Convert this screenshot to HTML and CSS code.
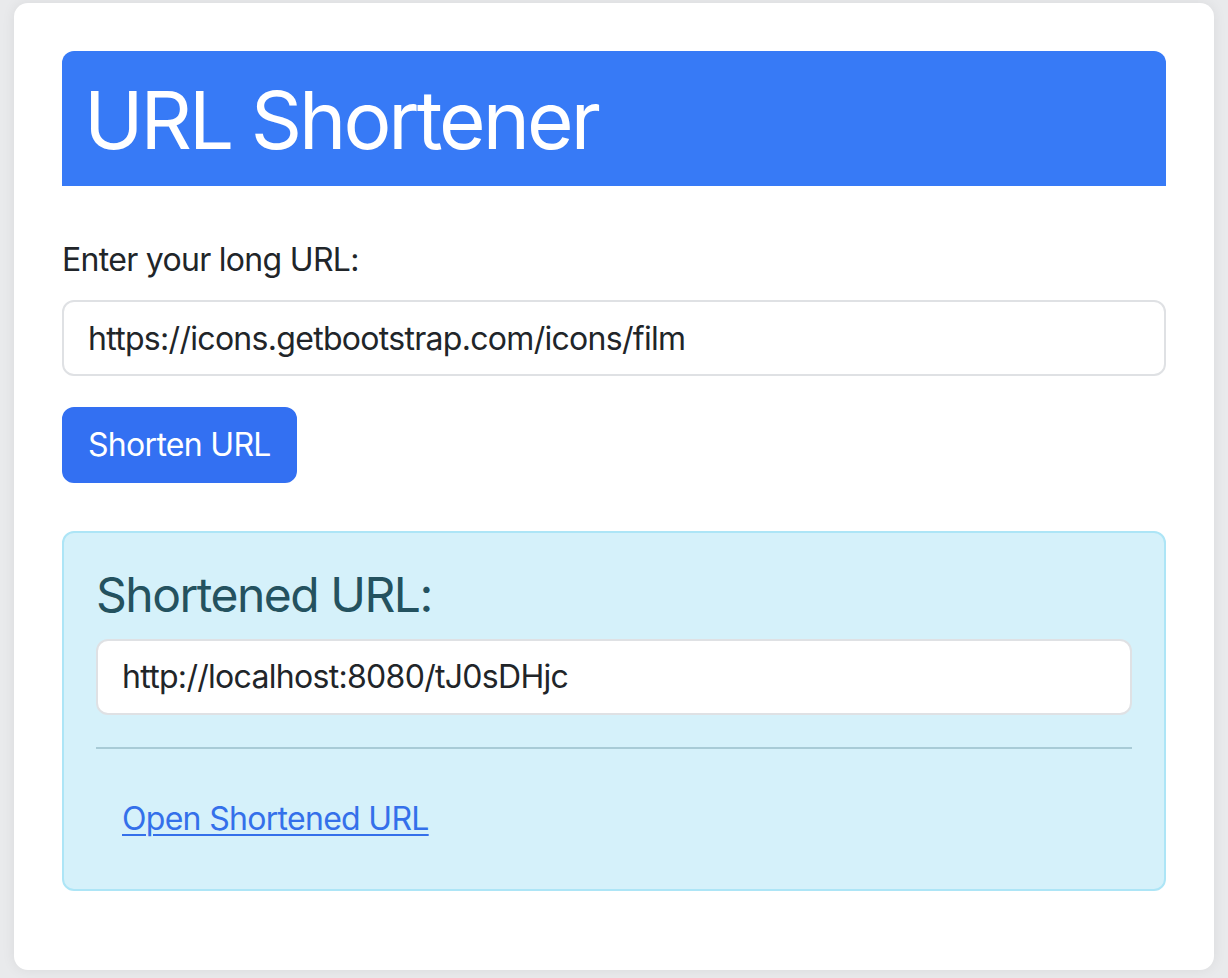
FILE: index.html
```html
<!DOCTYPE html>
<html lang="en">
<head>
<meta charset="utf-8">
<title>URL Shortener</title>
<link rel="stylesheet" href="styles.css">
</head>
<body>
<main class="card">
  <header class="banner">
    <h1 class="banner-title">URL Shortener</h1>
  </header>
  <form class="form">
    <label class="form-label" for="longUrl">Enter your long URL:</label>
    <input class="form-control" id="longUrl" type="text" value="https://icons.getbootstrap.com/icons/film">
    <button class="btn-primary" type="button">Shorten URL</button>
  </form>
  <section class="alert-info">
    <h4 class="alert-heading">Shortened URL:</h4>
    <input class="form-control" type="text" value="http://localhost:8080/tJ0sDHjc" readonly>
    <hr class="divider">
    <a class="btn-link" href="#">Open Shortened URL</a>
  </section>
</main>
</body>
</html>
```

FILE: styles.css
```css
* { box-sizing: border-box; }

html, body {
  margin: 0;
  height: 100%;
}

body {
  background: #e9eaec;
  padding: 3px 14px 8px;
  font-family: Inter, "Noto Sans", "Liberation Sans", sans-serif;
  color: #212529;
  font-size: 32px;
  line-height: 1.5;
  letter-spacing: -0.7px;
}

.card {
  background: #fff;
  border-radius: 14px;
  box-shadow: 0 0 14px rgba(0, 0, 0, 0.07);
  height: 967px;
  padding: 48px;
}

.banner {
  background: #377af6;
  border-radius: 12px 12px 0 0;
  height: 135px;
  padding: 0 22px;
  display: flex;
  align-items: center;
}

.banner-title {
  margin: 0;
  color: #fff;
  font-weight: 400;
  font-size: 80px;
  line-height: 96px;
  letter-spacing: -3px;
  padding-top: 2px;
}

.form {
  display: flex;
  flex-direction: column;
  align-items: flex-start;
  margin-top: 50px;
}

.form-label {
  display: block;
  margin-bottom: 16px;
}

.form-control {
  display: block;
  width: 100%;
  height: 76px;
  padding: 12px 24px;
  font: inherit;
  font-size: 32px;
  letter-spacing: -0.7px;
  color: #212529;
  background: #fff;
  border: 2px solid #dfe1e4;
  border-radius: 12px;
  outline: none;
}

.btn-primary {
  margin-top: 31px;
  height: 76px;
  padding: 12px 24px;
  font: inherit;
  font-size: 32px;
  letter-spacing: -0.7px;
  color: #fff;
  background: #3370f2;
  border: 2px solid #3370f2;
  border-radius: 12px;
}

.alert-info {
  margin-top: 48px;
  background: #d5f1fa;
  border: 2px solid #ade5f6;
  border-radius: 12px;
  padding: 33px 32px 32px;
}

.alert-heading {
  margin: 0 0 15px;
  font-size: 48px;
  font-weight: 400;
  line-height: 57.6px;
  color: #24525f;
  letter-spacing: -1.5px;
}

.divider {
  margin: 32px 0;
  border: 0;
  border-top: 2px solid #a8cbd6;
}

.btn-link {
  display: inline-block;
  height: 76px;
  padding: 12px 24px;
  border: 2px solid transparent;
  color: #3470ea;
  text-decoration: underline;
  text-underline-offset: 4px;
  text-decoration-thickness: 2px;
}
```
